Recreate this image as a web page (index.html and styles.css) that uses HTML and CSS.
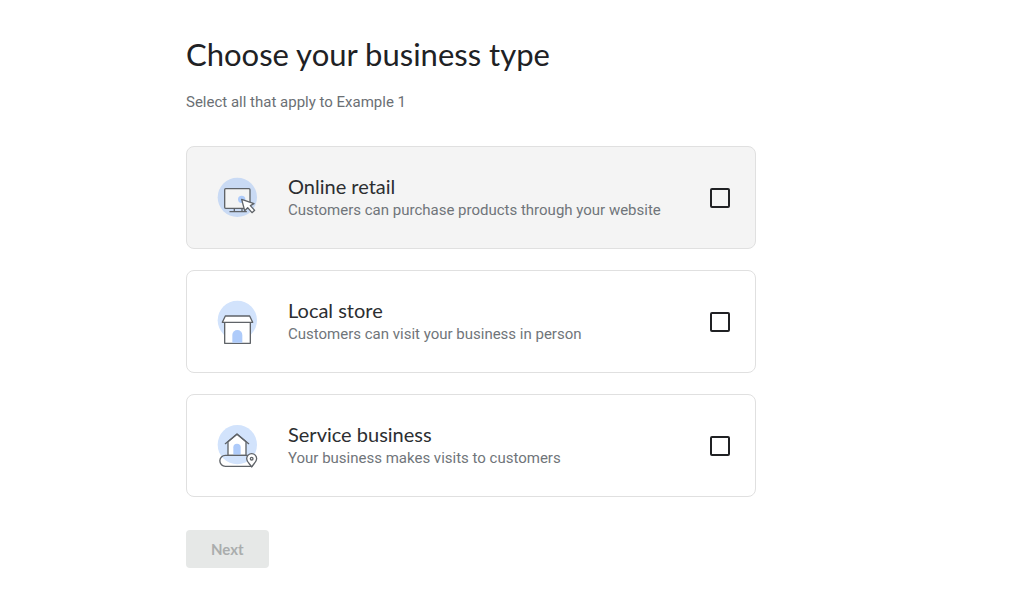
FILE: index.html
```html
<!DOCTYPE html>
<html lang="en">
<head>
<meta charset="utf-8">
<meta name="viewport" content="width=device-width, initial-scale=1">
<title>Choose your business type</title>
<link rel="stylesheet" href="styles.css">
</head>
<body>
<main class="page">
  <h1 class="title">Choose your business type</h1>
  <p class="subtitle">Select all that apply to Example 1</p>
  <form class="form">
    <div class="options">
      <label class="card card-active" for="online">
        <svg class="icon" viewBox="0 0 168 168" aria-hidden="true">
          <circle class="disc" cx="82" cy="82" r="59"/>
          <rect class="line" fill="#f4f4f4" x="44" y="56" width="76" height="59" rx="3"/>
          <path class="line" d="M73 116v8M96 116v8M60 125h49"/>
          <circle class="accent" cx="95" cy="88" r="11"/>
          <path class="line paper" d="M95 88l9 34 9-9 13 15 8-7-13-14 11-6z"/>
        </svg>
        <span class="text">
          <span class="name">Online retail</span>
          <span class="desc">Customers can purchase products through your website</span>
        </span>
        <input class="check" type="checkbox" id="online">
      </label>
      <label class="card" for="local">
        <svg class="icon" viewBox="0 0 168 168" aria-hidden="true">
          <circle class="disc" cx="82" cy="79" r="59"/>
          <rect class="line paper" x="44" y="84" width="77" height="64"/>
          <path class="line paper" d="M46 66h73l9 19H37z"/>
          <path class="accent" d="M67 146v-23a15 15 0 0 1 30 0v23z"/>
        </svg>
        <span class="text">
          <span class="name">Local store</span>
          <span class="desc">Customers can visit your business in person</span>
        </span>
        <input class="check" type="checkbox" id="local">
      </label>
      <label class="card" for="service">
        <svg class="icon" viewBox="0 0 168 168" aria-hidden="true">
          <circle class="disc" cx="82" cy="80" r="59"/>
          <path class="line paper" d="M54 112V71l27-22 27 22v41z"/>
          <path class="line" d="M46 77l35-29 35 29"/>
          <path class="accent" d="M70 110V88a11 11 0 0 1 22 0v22z"/>
          <path class="line" d="M112 112H46a16 16 0 0 0 0 33h80"/>
          <path class="line paper" d="M125 147c-5-9-15-15-15-25a15 15 0 0 1 30 0c0 10-10 16-15 25z"/>
          <circle class="line" fill="none" cx="125" cy="122" r="4"/>
        </svg>
        <span class="text">
          <span class="name">Service business</span>
          <span class="desc">Your business makes visits to customers</span>
        </span>
        <input class="check" type="checkbox" id="service">
      </label>
    </div>
    <button class="next" type="button" disabled>Next</button>
  </form>
</main>
</body>
</html>
```
FILE: styles.css
```css
* {
  box-sizing: border-box;
}

body {
  margin: 0;
  background: #fff;
  color: #202124;
  font-family: Roboto, sans-serif;
}

.page {
  max-width: 780px;
  padding: 34px 24px 36px 186px;
}

.title {
  margin: 0;
  font: 400 31px/40px Lato, sans-serif;
}

.subtitle {
  margin: 18px 0 34px;
  color: #6b6f74;
  font-size: 15px;
  line-height: 20px;
}

.options {
  display: grid;
  gap: 21px;
}

.card {
  display: flex;
  align-items: center;
  min-height: 103px;
  padding: 8px 25px 8px 23px;
  border: 1px solid #e0e0e0;
  border-radius: 8px;
  cursor: pointer;
}

.card-active {
  background: #f4f4f4;
}

.icon {
  flex: none;
  width: 56px;
  height: 56px;
}

.disc {
  fill: #d2e3fc;
}

.card-active .disc {
  fill: #c9daf4;
}

.accent {
  fill: #aecbfa;
}

.line {
  stroke: #5f6368;
  stroke-width: 4;
  stroke-linejoin: round;
  stroke-linecap: round;
}

path.line:not(.paper) {
  fill: none;
}

.paper {
  fill: #fff;
}

.text {
  display: grid;
  flex: 1;
  padding: 0 22px;
}

.name {
  color: #2c2e31;
  font: 400 20px/24px Lato, sans-serif;
}

.desc {
  color: #70757a;
  font-size: 15px;
  line-height: 24px;
}

.check {
  flex: none;
  width: 20px;
  height: 20px;
  margin: 0;
  appearance: none;
  border: 2px solid #202124;
  border-radius: 2px;
}

.check:checked {
  background: #202124;
}

.next {
  margin-top: 33px;
  padding: 8px 25px;
  border: 0;
  border-radius: 4px;
  background: #e6e8e7;
  color: #aaadad;
  font: 700 15px/22px Lato, sans-serif;
}
```
